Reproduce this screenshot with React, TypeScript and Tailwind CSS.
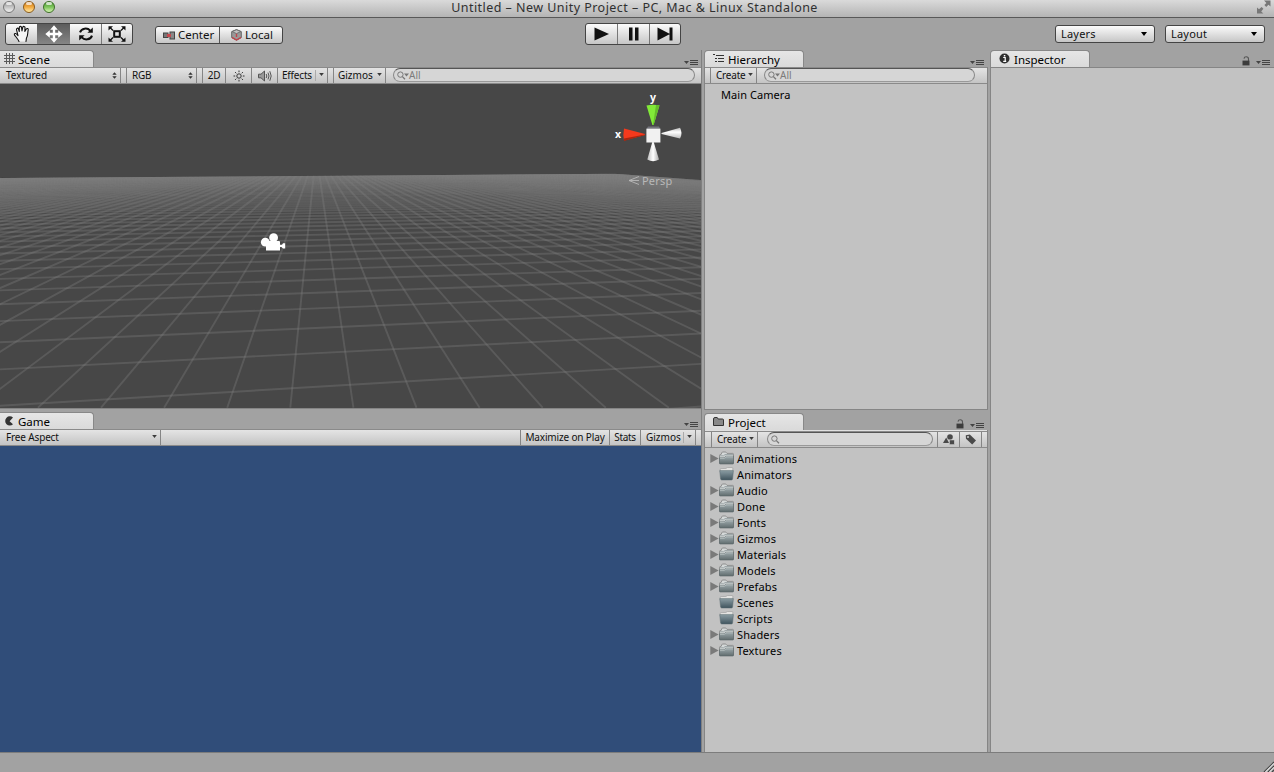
import React from 'react';
import clsx from 'clsx';

// ---------- icons ----------

const HandIcon = () => (
  <svg width="18" height="18" viewBox="0 0 18 18" fill="#f4f4f4" stroke="#111" strokeWidth="1.1" strokeLinejoin="round" strokeLinecap="round">
    <path d="M6 16.5 C5 14 3 12 1.4 9.9 C1 8.4 2.6 8 3.5 9 L5 10.6 L3.5 4.6 C3.3 3 5 2.7 5.5 4 L6.3 6.5 L6.3 2.5 C6.4 1 8.2 1 8.5 2.4 L9 6 L9.8 2.2 C10.2 1 12 1.2 12 2.6 L11.8 6.4 L13.3 4 C14 3 15.6 3.6 15.2 5 C14.4 8 15.2 10.6 13.4 13.2 L13 16.5" />
  </svg>
);

const MoveIcon = () => (
  <svg width="18" height="18" viewBox="0 0 18 18" fill="#fff">
    <path d="M9 .3 L12.8 4.8 H10.2 V7.8 H13.2 V5.2 L17.7 9 L13.2 12.8 V10.2 H10.2 V13.2 H12.8 L9 17.7 L5.2 13.2 H7.8 V10.2 H4.8 V12.8 L.3 9 L4.8 5.2 V7.8 H7.8 V4.8 H5.2 Z" />
  </svg>
);

const RotateIcon = () => (
  <svg width="16" height="16" viewBox="0 0 16 16" fill="none" stroke="#111" strokeWidth="2">
    <path d="M2 6.4 C3.4 2 9.4 1.4 12.2 4.6" />
    <path d="M14.8 1.6 V6.8 H9.4 Z" fill="#111" stroke="none" />
    <path d="M14 9.6 C12.6 14 6.6 14.6 3.8 11.4" />
    <path d="M1.2 14.4 V9.2 H6.6 Z" fill="#111" stroke="none" />
  </svg>
);

const ScaleIcon = () => (
  <svg width="18" height="16" viewBox="0 0 18 16" fill="none" stroke="#111">
    <rect x="6.2" y="5.2" width="5.6" height="5.6" strokeWidth="2" />
    <path d="M5 4.4 L2 1.6 M13 4.4 L16 1.6 M5 11.6 L2 14.4 M13 11.6 L16 14.4" strokeWidth="1.3" />
    <path d="M.5 .3 H5 L.5 4.6Z M17.5 .3 H13 L17.5 4.6Z M.5 15.7 H5 L.5 11.4Z M17.5 15.7 H13 L17.5 11.4Z" fill="#111" stroke="none" />
  </svg>
);

const CenterIcon = () => (
  <svg width="12" height="9" viewBox="0 0 12 9">
    <rect x=".5" y="2" width="4.5" height="4.5" fill="#777" stroke="#444" />
    <rect x="7" y="1" width="4.5" height="7" fill="#888" stroke="#444" />
    <rect x="4" y="3" width="4" height="3" fill="#c8474c" />
  </svg>
);

const CubeIcon = () => (
  <svg width="11" height="12" viewBox="0 0 11 12" strokeWidth="1">
    <path d="M5.5 .6 L10.3 2.6 V8.6 L5.5 11.2 L.7 8.6 V2.6Z" fill="#999" stroke="#666" />
    <path d="M5.5 .8 L9.8 2.6 L5.5 4.6 L1.2 2.6Z" fill="#c4c4c4" stroke="#666" strokeWidth=".8" />
    <path d="M5.5 4.8 V8" stroke="#c0444a" strokeWidth="1.4" />
    <path d="M1 8.4 L5.5 11 L10 8.4" fill="none" stroke="#c0444a" strokeWidth="1.4" />
  </svg>
);

const UpDown = () => (
  <svg width="5" height="7" viewBox="0 0 5 7" fill="#333">
    <path d="M2.5 .3 L4.7 2.8 H.3Z M2.5 6.7 L4.7 4.2 H.3Z" />
  </svg>
);

const Caret = ({ big = false }: { big?: boolean }) =>
  big ? (
    <svg width="6" height="4" viewBox="0 0 6 4" fill="#000"><path d="M0 0 H6 L3 4Z" /></svg>
  ) : (
    <svg width="5" height="3" viewBox="0 0 5 3" fill="#3a3a3a" className="-mt-[2px]"><path d="M.2 0 H4.8 L2.5 3Z" /></svg>
  );

const SunIcon = () => (
  <svg width="12" height="12" viewBox="0 0 12 12" fill="none" stroke="#333" strokeWidth="1">
    <circle cx="6" cy="6" r="2.2" />
    <path d="M6 .5V2.2 M6 9.8V11.5 M.5 6H2.2 M9.8 6H11.5 M2.1 2.1L3.3 3.3 M8.7 8.7L9.9 9.9 M9.9 2.1L8.7 3.3 M3.3 8.7L2.1 9.9" />
  </svg>
);

const SpeakerIcon = () => (
  <svg width="14" height="12" viewBox="0 0 14 12" fill="none" stroke="#555">
    <path d="M.5 4.2 H3 L6.5 1 V11 L3 7.8 H.5Z" fill="#999" />
    <path d="M8.2 4 Q9.4 6 8.2 8 M10 2.6 Q12 6 10 9.4 M11.8 1.2 Q14.6 6 11.8 10.8" />
  </svg>
);

const GridIcon = () => (
  <svg width="11" height="11" viewBox="0 0 11 11" stroke="#444" shapeRendering="crispEdges">
    <path d="M2.5 0V11 M5.5 0V11 M8.5 0V11 M0 2.5H11 M0 5.5H11 M0 8.5H11" opacity=".85" />
  </svg>
);

const PacIcon = () => (
  <svg width="9" height="10" viewBox="0 0 9 10" fill="#333">
    <path d="M8 1.6 A4.6 4.6 0 1 0 8 8.2 L4.6 5.2Z" />
  </svg>
);

const ListIcon = () => (
  <svg width="11" height="9" viewBox="0 0 11 9" stroke="#333" shapeRendering="crispEdges">
    <path d="M0 .5H2 M3 1.5H11 M2 4.5H4 M5 4.5H11 M2 7.5H4 M5 7.5H11" />
  </svg>
);

const TabFolder = () => (
  <svg width="11" height="9" viewBox="0 0 11 9">
    <path d="M.5 8.5 V2 Q.5 .5 2 .5 H4.2 L5.2 2 H9.5 Q10.5 2 10.5 3 V8.5Z" fill="#888" stroke="#333" />
  </svg>
);

const InfoIcon = () => (
  <svg width="11" height="11" viewBox="0 0 11 11">
    <circle cx="5.5" cy="5.5" r="5" fill="#2e2e2e" />
    <path d="M4.2 4.5H6.2V8 M4.2 8.3H7.2" stroke="#fff" fill="none" strokeWidth="1.2" />
    <rect x="4.8" y="2" width="1.5" height="1.5" fill="#fff" />
  </svg>
);

const LockIcon = () => (
  <svg width="8" height="10" viewBox="0 0 8 10">
    <path d="M2 2.6 Q2.2 .8 4.2 .8 Q6.5 .8 6.5 3 V5" fill="none" stroke="#555" strokeWidth="1.1" />
    <rect x=".5" y="4.6" width="7" height="4.8" fill="#3c3c3c" />
  </svg>
);

const PaneMenu = () => (
  <svg width="14" height="6" viewBox="0 0 14 6" fill="#444" shapeRendering="crispEdges">
    <path d="M0 1H5L2.5 4Z" shapeRendering="auto" />
    <path d="M6 0H14V1H6Z M6 2H14V3H6Z M6 4H14V5H6Z" />
  </svg>
);

const SearchIcon = ({ caret = false }: { caret?: boolean }) => (
  <svg width={caret ? 12 : 9} height="9" viewBox={caret ? '0 0 12 9' : '0 0 9 9'} fill="none" stroke="#777">
    <circle cx="3.4" cy="3.6" r="2.7" />
    <path d="M5.4 5.6 L8 8.2" strokeWidth="1.3" />
    {caret && <path d="M7 2.4H12L9.5 5.4Z" fill="#777" stroke="none" />}
  </svg>
);

const ShapesIcon = () => (
  <svg width="12" height="11" viewBox="0 0 12 11" fill="#4a4a4a">
    <circle cx="7" cy="3" r="2.8" />
    <path d="M3.2 3.6 L6 9 H0Z" />
    <rect x="6.5" y="6" width="4.8" height="4.6" stroke="#d0d0d0" strokeWidth=".5" />
  </svg>
);

const TagIcon = () => (
  <svg width="12" height="11" viewBox="0 0 12 11">
    <path d="M.8 1.2 L4.8 .6 L11 6.4 L7.2 10.6 L1 4.8Z" fill="#4a4a4a" />
    <circle cx="3" cy="2.9" r="1" fill="#d0d0d0" />
  </svg>
);

const Folder = ({ open }: { open: boolean }) =>
  open ? (
    <svg width="15" height="14" viewBox="0 0 15 14">
      <path d="M1.2 5 V2.4 Q1.2 1.6 2 1.6 L7 1.4 L8.4 .5 H13 Q13.8 .5 13.8 1.4 V5Z" fill="#e2e2e0" stroke="#999" strokeWidth=".6" />
      <path d="M.7 3.6 H14.4 L13.6 12 Q13.4 13 12.4 13 H2.8 Q1.8 13 1.6 12Z" fill="url(#openFolder)" stroke="#5a6a70" strokeWidth=".5" />
    </svg>
  ) : (
    <svg width="15" height="14" viewBox="0 0 15 14">
      <path d="M.5 12 V4.4 Q.5 3.6 1.3 3.6 H2 L3 1.4 Q3.2 1 3.8 1 H6.4 Q7 1 7.3 1.5 L8 2.4 H13.6 Q14.5 2.4 14.5 3.2 V12Z" fill="#d4d8d8" stroke="#777" strokeWidth=".7" />
      <path d="M.5 6.8 H5.2 L6.6 5.2 H14.5 V12.4 Q14.5 13 13.8 13 H1.2 Q.5 13 .5 12.4Z" fill="url(#closedFolder)" stroke="#5b6669" strokeWidth=".6" />
      <path d="M1 7.4 H5.4 L6.9 5.8 H14" fill="none" stroke="#c9d1d2" strokeWidth=".6" />
      <path d="M1 4.8 H4.6 L6 3.6 H14" fill="none" stroke="#7f8b8e" strokeWidth=".7" />
    </svg>
  );

// ---------- shared pieces ----------

const Divider = () => <div className="h-full w-px shrink-0 bg-[#858585]" />;

type TabProps = {
  icon: React.ReactNode;
  label: string;
  width: string;
  first?: boolean;
  lock?: boolean;
  pad?: string;
};

const TabBar = ({ icon, label, width, first, lock, pad = 'pr-[9px]' }: TabProps) => (
  <div className={clsx('flex h-[17px] shrink-0 items-end justify-between', pad)}>
    <div
      className={clsx(
        'flex h-[17px] items-center border-t border-r border-[#888] bg-linear-to-b from-[#e6e6e6] to-[#dadada] pt-px text-[11.5px] text-black',
        width,
        first ? 'rounded-tr-[4px] pl-1' : 'rounded-t-[4px] border-l pl-2',
      )}
    >
      <span className={clsx('flex w-[11px] -translate-y-px justify-center', first ? 'mr-[3px]' : 'mr-[4px]')}>{icon}</span>
      {label}
    </div>
    <div className="flex items-end gap-[6px]">
      {lock && <span className="mb-px"><LockIcon /></span>}
      <span className="mb-px"><PaneMenu /></span>
    </div>
  </div>
);

const Bar = ({ children }: { children: React.ReactNode }) => (
  <div className="flex h-[17px] shrink-0 items-center border-y border-t-[#8a8a8a] border-b-[#8a8a8a] bg-linear-to-b from-[#e4e4e4] to-[#c4c4c4] text-[10px] text-[#111]">
    {children}
  </div>
);

const SearchBox = ({ width, all = false }: { width: string; all?: boolean }) => (
  <div className={clsx('-mt-px flex h-[14px] items-center rounded-full border border-t-[#555] border-x-[#888] border-b-[#999] bg-[#d6d6d6] pl-[3px] text-[10px] text-[#7b7b7b]', width)}>
    <SearchIcon caret={all} />
    {all && <span className="-mt-px leading-none">All</span>}
  </div>
);

// ---------- scene view ----------

// Vanishing points of the two families of floor lines
const VPX = { x: 316, y: 152 };
const VPZ = { x: 4340, y: 147 };

const SceneView = () => {
  const lines: string[] = [];
  for (let j = -62; j <= 54; j++) {
    lines.push(`M${VPX.x} ${VPX.y}L${290.3 + 63.1 * j} 407.7`);
  }
  for (let k = -1; k <= 53; k++) {
    const y0 = 152.4 + 1 / (0.003948 + 0.00066 * k);
    const y1 = y0 + ((VPZ.y - y0) * 701) / VPZ.x;
    lines.push(`M0 ${y0}L701 ${y1}`);
  }
  return (
    <svg width="701" height="324" viewBox="0 84 701 324" className="block shrink-0 bg-[#474747]">
      <defs>
        <clipPath id="floor"><path d="M0 178 L615 173.8 L701 180 V408 H0Z" /></clipPath>
        <linearGradient id="coneW" x1="0" x2="1"><stop offset="0" stopColor="#bbb" /><stop offset=".5" stopColor="#fff" /><stop offset="1" stopColor="#aaa" /></linearGradient>
        <linearGradient id="coneH" x1="0" x2="0" y1="0" y2="1"><stop offset="0" stopColor="#bbb" /><stop offset=".4" stopColor="#fff" /><stop offset="1" stopColor="#bbb" /></linearGradient>
      </defs>
      <g clipPath="url(#floor)" stroke="#808080" strokeOpacity=".34" strokeWidth="1.9">
        {lines.map((d) => <path key={d} d={d} />)}
      </g>

      {/* camera gizmo */}
      <g fill="#fff">
        <circle cx="265.3" cy="242.2" r="4.4" />
        <circle cx="273.6" cy="237.7" r="4.4" />
        <path d="M266 241 H279 Q280 241 280 242 V244.8 H282 L283 243.3 H285.2 V248.4 H283 L281.5 247 H280 V250.5 H266Z" />
      </g>

      {/* orientation gizmo */}
      <path d="M646.5 105.5 Q653 104 659.5 105.5 L653.6 125 H652.4Z" fill="#82ea38" />
      <path d="M656 105 H659.5 L653.6 125 H653Z" fill="#65bd2b" />
      <path d="M624 128.5 Q622.8 134.5 624 140.5 L645 135 V134Z" fill="#f5391c" />
      <path d="M624 138.5 V141 L645 135 V134.5Z" fill="#a82610" />
      <path d="M661.5 133 L680 127.8 Q683 133 680 138.6 L661.5 134Z" fill="url(#coneH)" />
      <path d="M652.3 142 H653.7 L659 159.6 Q653 163 647.3 159.6Z" fill="url(#coneW)" />
      <path d="M646.5 129 L648 126.6 H659 L660.3 129Z" fill="#74747c" />
      <rect x="646.4" y="128.7" width="14" height="13.8" fill="#f1f1f1" />
      <g fill="#fff" fontFamily="'Noto Sans', sans-serif" fontSize="10.5" fontWeight="700">
        <text x="650" y="100.5">y</text>
        <text x="615" y="138">x</text>
      </g>
      <path d="M639 176.5 L629 180.5 L639 184.5 M629 180.5 H639" fill="none" stroke="#b8b8b8" strokeWidth=".9" />
      <text x="642" y="185" fill="#b8b8b8" fontFamily="'Noto Sans', sans-serif" fontSize="11" letterSpacing=".2">Persp</text>
    </svg>
  );
};

// ---------- data ----------

const folders = [
  { name: 'Animations', expandable: true },
  { name: 'Animators', expandable: false },
  { name: 'Audio', expandable: true },
  { name: 'Done', expandable: true },
  { name: 'Fonts', expandable: true },
  { name: 'Gizmos', expandable: true },
  { name: 'Materials', expandable: true },
  { name: 'Models', expandable: true },
  { name: 'Prefabs', expandable: true },
  { name: 'Scenes', expandable: false },
  { name: 'Scripts', expandable: false },
  { name: 'Shaders', expandable: true },
  { name: 'Textures', expandable: true },
];

const lights = [
  'border-[#777] from-[#8d8d8d] via-[#c4c4c4] to-[#f0f0f0]',
  'border-[#8a5a1c] from-[#c87a22] via-[#f2a93c] to-[#ffe9a0]',
  'border-[#3c6e28] from-[#4f9636] via-[#7cc45a] to-[#d4f5b0]',
];

const btn = 'rounded-[3px] border border-[#444] bg-linear-to-b from-[#fbfbfb] to-[#c6c6c6]';

const TitleBar = () => (
  <div className="relative flex h-[18px] shrink-0 items-start justify-center border-b border-[#585858] bg-linear-to-b from-[#dadada] to-[#b4b4b4]">
    <div className="absolute top-px left-[3px] flex gap-2">
      {lights.map((c) => (
        <span key={c} className={clsx('relative h-3 w-3 rounded-full border bg-linear-to-b', c)}>
          <span className="absolute top-0 left-[2px] h-[3px] w-[6px] rounded-full bg-white/70" />
        </span>
      ))}
    </div>
    <span className="pr-[5px] text-[12.5px] leading-[15px] tracking-[0.46px] text-[#303030]">
      Untitled – New Unity Project – PC, Mac &amp; Linux Standalone
    </span>
    <svg className="absolute top-0 right-[3px]" width="14" height="14" viewBox="0 0 14 14" fill="#777">
      <path d="M7 .5 H13.5 V6.5 L11.5 4.8 L9.2 7 L7.4 5 L9.4 3Z M0 7.5 L2 9.2 L4.6 7 L6.4 8.8 L4.2 11.4 L6.4 13.5 H0Z" />
    </svg>
  </div>
);

const Toolbar = () => (
  <div className="flex h-[32px] shrink-0 items-start pt-[5px] pr-[9px] pl-[5px]">
    <div className={clsx('flex h-[22px] w-[128px] overflow-hidden', btn)}>
      <div className="flex w-[31px] items-center justify-center"><HandIcon /></div>
      <div className="flex w-[33px] items-center justify-center bg-linear-to-b from-[#5c5c5c] to-[#868686]"><MoveIcon /></div>
      <div className="flex w-[31px] items-center justify-center"><RotateIcon /></div>
      <div className="flex flex-1 items-center justify-center border-l border-[#777]"><ScaleIcon /></div>
    </div>
    <div className={clsx('mt-[3px] ml-[22px] flex h-[18px] w-[128px] text-[11.5px] text-[#111]', btn)}>
      <div className="flex w-[64px] items-center gap-[3px] border-r border-[#555] pl-[7px]"><CenterIcon />Center</div>
      <div className="flex items-center gap-[3px] pl-[11px]"><CubeIcon />Local</div>
    </div>
    <div className={clsx('ml-[302px] flex h-[22px] w-[96px]', btn)}>
      <div className="flex w-[32px] items-center justify-center border-r border-[#777]">
        <svg width="15" height="14" viewBox="0 0 15 14"><path d="M.5 .5 L15 7 L.5 13.5Z" fill="#111" /></svg>
      </div>
      <div className="flex w-[32px] items-center justify-center border-r border-[#777]">
        <svg width="10" height="14" viewBox="0 0 10 14" fill="#111"><path d="M0 .5H3.5V13.5H0Z M6 .5H9.5V13.5H6Z" /></svg>
      </div>
      <div className="flex flex-1 items-center justify-center">
        <svg width="16" height="14" viewBox="0 0 16 14" fill="#111"><path d="M.5 .5 L13 7 L.5 13.5Z M12.5 .5H15.5V13.5H12.5Z" /></svg>
      </div>
    </div>
    <div className="mt-[2px] ml-auto flex gap-[10px] text-[11px] tracking-[0.2px] text-[#111]">
      {['Layers', 'Layout'].map((t) => (
        <div key={t} className={clsx('flex h-[18px] w-[100px] items-center justify-between pr-[7px] pl-[5px]', btn)}>
          {t}
          <Caret big />
        </div>
      ))}
    </div>
  </div>
);

const App = () => (
  <div className="flex h-[772px] w-[1274px] flex-col overflow-hidden bg-[#a2a2a2] font-['Noto_Sans','Open_Sans',sans-serif] whitespace-nowrap">
    <TitleBar />
    <Toolbar />

    <div className="flex min-h-0 flex-1">
      {/* Scene / Game */}
      <div className="flex w-[702px] shrink-0 flex-col border-r border-[#808080]">
        <TabBar icon={<GridIcon />} label="Scene" width="w-[94px]" first pad="pr-[3px]" />
        <Bar>
          <div className="flex w-[120px] items-center justify-between pr-[3px] pl-[6px]">Textured<UpDown /></div>
          <Divider />
          <div className="w-[5px]" />
          <Divider />
          <div className="flex w-[69px] items-center justify-between pr-[3px] pl-[5px] tracking-[-0.2px]">RGB<UpDown /></div>
          <Divider />
          <div className="w-[5px]" />
          <Divider />
          <div className="w-[22px] text-center tracking-[-0.2px]">2D</div>
          <Divider />
          <div className="flex w-[25px] justify-center"><SunIcon /></div>
          <Divider />
          <div className="flex w-[25px] justify-center"><SpeakerIcon /></div>
          <Divider />
          <div className="flex w-[49px] items-center pl-[4px] tracking-[-0.2px]">
            Effects
            <span className="mr-[3px] ml-auto h-[11px] w-px bg-[#aaa]" />
            <span className="mr-[3px] flex"><Caret /></span>
          </div>
          <Divider />
          <div className="w-[5px]" />
          <Divider />
          <div className="flex w-[51px] items-center justify-between pr-[3px] pl-[4px]">Gizmos<Caret /></div>
          <Divider />
          <div className="ml-[7px]"><SearchBox width="w-[302px]" all /></div>
        </Bar>
        <SceneView />
        <div className="h-[4px] shrink-0 border-t border-[#858585]" />
        <TabBar icon={<PacIcon />} label="Game" width="w-[94px]" first pad="pr-[3px]" />
        <Bar>
          <div className="flex w-[160px] items-center justify-between pr-[3px] pl-[6px] tracking-[-0.15px]">Free Aspect<Caret /></div>
          <Divider />
          <div className="flex-1" />
          <Divider />
          <div className="w-[88px] text-center tracking-[-0.15px]">Maximize on Play</div>
          <Divider />
          <div className="w-[30px] text-center tracking-[-0.3px]">Stats</div>
          <Divider />
          <div className="flex w-[54px] items-center pl-[5px]">
            Gizmos
            <span className="mr-[3px] ml-auto h-[11px] w-px bg-[#aaa]" />
            <span className="mr-[3px] flex"><Caret /></span>
          </div>
          <Divider />
          <div className="w-[5px]" />
        </Bar>
        <div className="flex-1 bg-[#304d79]" />
      </div>

      {/* Hierarchy / Project */}
      <div className="ml-[2px] flex w-[284px] shrink-0 flex-col">
        <TabBar icon={<ListIcon />} label="Hierarchy" width="w-[100px]" pad="pr-[4px]" />
        <div className="flex h-[343px] shrink-0 flex-col border-x border-b border-[#858585] bg-[#c2c2c2]">
          <Bar>
            <div className="w-[5px]" />
            <Divider />
            <div className="flex w-[45px] items-center justify-between pr-[3px] pl-[5px] tracking-[-0.2px]">Create<Caret /></div>
            <Divider />
            <div className="ml-[7px]"><SearchBox width="w-[211px]" all /></div>
          </Bar>
          <div className="pt-[3px] pl-[16px] text-[11px] leading-4 tracking-[0.06px] text-black">Main Camera</div>
        </div>
        <div className="h-[3px] shrink-0" />
        <TabBar icon={<TabFolder />} label="Project" width="w-[100px]" lock pad="pr-[4px]" />
        <div className="flex min-h-0 flex-1 flex-col border-x border-[#858585] bg-[#c2c2c2]">
          <div className="h-px shrink-0 bg-[#e0e0e0]" />
          <Bar>
            <div className="w-[6px]" />
            <Divider />
            <div className="flex w-[45px] items-center justify-between pr-[3px] pl-[5px] tracking-[-0.2px]">Create<Caret /></div>
            <Divider />
            <div className="mr-[4px] ml-[9px]"><SearchBox width="w-[166px]" /></div>
            <Divider />
            <div className="flex w-[21px] justify-center"><ShapesIcon /></div>
            <Divider />
            <div className="flex w-[21px] justify-center"><TagIcon /></div>
            <Divider />
          </Bar>
          <ul className="pt-[3px] pl-[5px] text-[11px] text-black">
            {folders.map((f) => (
              <li key={f.name} className="flex h-4 items-center leading-4 tracking-[0.14px]">
                <svg width="9" height="9" viewBox="0 0 9 9" className="-mt-[2px]">
                  {f.expandable && <path d="M.3 0 L8.6 4.5 L.3 9Z" fill="#7a7a7a" />}
                </svg>
                <span className="mr-[3px] -mt-[2px]"><Folder open={!f.expandable} /></span>
                {f.name}
              </li>
            ))}
          </ul>
        </div>
      </div>

      {/* Inspector */}
      <div className="ml-[2px] flex min-w-0 flex-1 flex-col">
        <TabBar icon={<InfoIcon />} label="Inspector" width="w-[100px]" lock pad="pr-[4px]" />
        <div className="flex-1 border-t border-l border-[#858585] bg-[#c2c2c2]" />
      </div>
    </div>

    {/* status bar */}
    <div className="flex h-[20px] shrink-0 items-end justify-end border-t border-[#7c7c7c]">
      <svg width="11" height="11" viewBox="0 0 11 11" strokeWidth="1.2">
        <path d="M1 11 L11 1 M5 11 L11 5 M9 11 L11 9" stroke="#444" />
        <path d="M2.5 11 L11 2.5 M6.5 11 L11 6.5" stroke="#ddd" />
      </svg>
    </div>

    <svg width="0" height="0" className="absolute">
      <defs>
        <linearGradient id="closedFolder" x1="0" x2="0" y1="0" y2="1"><stop offset="0" stopColor="#9fabae" /><stop offset="1" stopColor="#5f6b6d" /></linearGradient>
        <linearGradient id="openFolder" x1="0" x2="0" y1="0" y2="1"><stop offset="0" stopColor="#8b9ca3" /><stop offset="1" stopColor="#40545d" /></linearGradient>
      </defs>
    </svg>
  </div>
);

export default App;
